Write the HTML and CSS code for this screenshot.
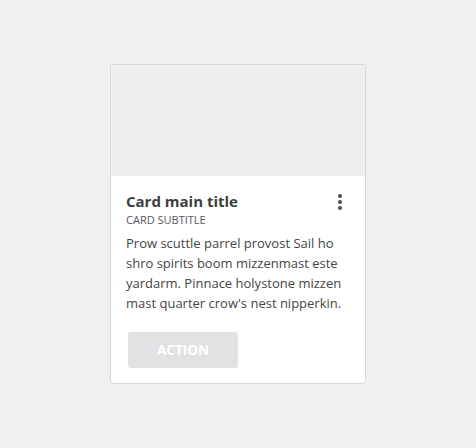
FILE: index.html
```html
<!DOCTYPE html>
<html>
<head>
<meta charset="utf-8">
<link rel="stylesheet" href="styles.css">
</head>
<body>
<div class="page">
  <div class="card">
    <div class="media"></div>
    <div class="content">
      <div class="header">
        <div class="titles">
          <div class="title">Card main title</div>
          <div class="subtitle">CARD SUBTITLE</div>
        </div>
        <svg class="more" width="24" height="24" viewBox="0 0 24 24"><circle cx="12" cy="6" r="2"/><circle cx="12" cy="12" r="2"/><circle cx="12" cy="18" r="2"/></svg>
      </div>
      <p class="text">Prow scuttle parrel provost Sail ho shro spirits boom mizzenmast este yardarm. Pinnace holystone mizzen mast quarter crow's nest nipperkin.</p>
      <div class="actions">
        <button class="action">ACTION</button>
      </div>
    </div>
  </div>
</div>
</body>
</html>
```
FILE: styles.css
```css
html, body {
  margin: 0;
  padding: 0;
  background: #f0f0f0;
  font-family: "Open Sans", "Liberation Sans", sans-serif;
}
.page {
  min-height: 100vh;
  display: flex;
  align-items: center;
  justify-content: center;
}
.card {
  width: 256px;
  box-sizing: border-box;
  border: 1px solid #d9d9d9;
  border-radius: 3px;
  background: #ffffff;
  overflow: hidden;
}
.media {
  height: 111px;
  background: #efefef;
}
.content {
  padding: 14px 15px 15px 15px;
}
.header {
  display: flex;
  justify-content: space-between;
  align-items: flex-start;
}
.title {
  font-size: 15px;
  line-height: 22px;
  font-weight: 700;
  color: #3b3e42;
  margin-bottom: 1px;
}
.subtitle {
  font-size: 11px;
  line-height: 13px;
  color: #55585c;
}
.more {
  fill: #4a4d50;
  margin-top: 0;
  margin-right: -2px;
}
.text {
  margin: 7px 0 0 0;
  font-size: 13px;
  line-height: 20px;
  color: #454545;
}
.actions {
  margin-top: 19px;
  display: flex;
}
.action {
  margin-left: 2px;
  width: 110px;
  height: 36px;
  border: none;
  border-radius: 3px;
  background: #e1e2e4;
  color: #ffffff;
  font-family: "Open Sans", "Liberation Sans", sans-serif;
  font-size: 13.5px;
  font-weight: 700;
  padding: 0;
}
```
